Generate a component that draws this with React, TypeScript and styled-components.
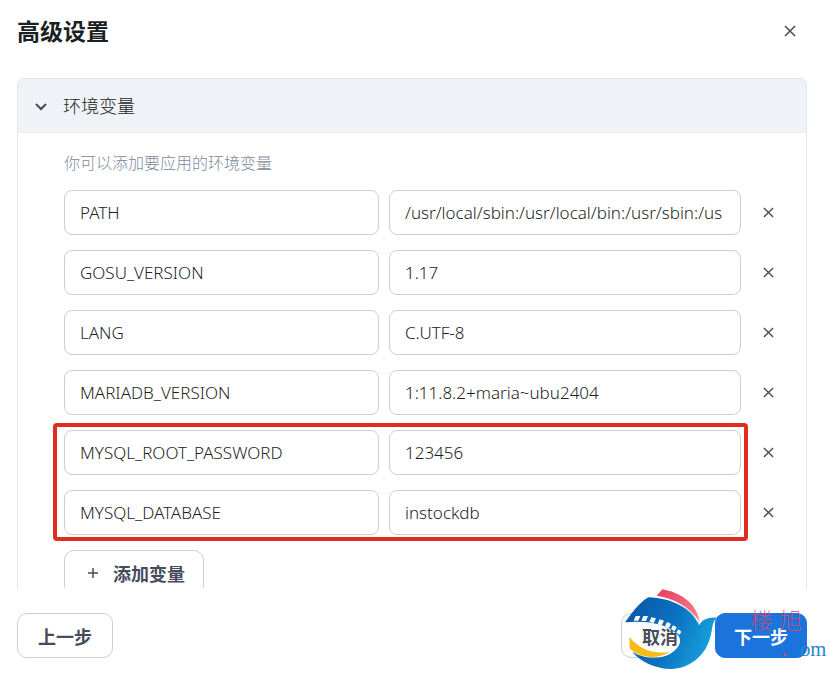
import React, { useState } from "react";
import styled, { createGlobalStyle, css } from "styled-components";

const GlobalStyle = createGlobalStyle`
  *, *::before, *::after { box-sizing: border-box; }
  body {
    margin: 0;
    background: #fff;
    color: #1c1f24;
    font-family: "Noto Sans", "Noto Sans CJK SC", sans-serif;
    font-size: 17px;
  }
  button, input { font: inherit; color: inherit; }
`;

const Dialog = styled.main`
  display: flex;
  flex-direction: column;
  height: 100vh;
  padding: 0 24px 18px 17px;
  overflow: hidden;
`;

const Header = styled.header`
  display: flex;
  flex: none;
  align-items: center;
  justify-content: space-between;
  height: 78px;
  padding: 0 8px 16px 0;
`;

const Title = styled.h1`
  margin: 0;
  font-size: 23px;
  font-weight: 700;
  line-height: 32px;
`;

const IconButton = styled.button`
  display: grid;
  flex: none;
  place-items: center;
  width: 18px;
  height: 18px;
  padding: 0;
  border: 0;
  background: none;
  color: #454c57;
  cursor: pointer;
`;

const ScrollArea = styled.div`
  flex: 1;
  min-height: 0;
  overflow: hidden;
`;

const Panel = styled.section`
  border: 1px solid #e4e8ed;
  border-radius: 6px;
`;

const PanelHeader = styled.button`
  display: flex;
  align-items: center;
  gap: 13px;
  width: 100%;
  height: 54px;
  padding: 0 14px 2px;
  border: 0;
  border-bottom: 1px solid #e9edf2;
  border-radius: 5px 5px 0 0;
  background: #eff3f8;
  font-size: 18px;
  font-weight: 300;
  cursor: pointer;
`;

const PanelBody = styled.div`
  padding: 18px 29px 24px 46px;
`;

const Hint = styled.p`
  margin: 0 0 15px;
  color: #7c8a9d;
  font-size: 16px;
  font-weight: 300;
  line-height: 24px;
`;

const Rows = styled.div`
  display: flex;
  flex-direction: column;
  gap: 15px;
`;

const Highlight = styled(Rows)`
  position: relative;

  &::after {
    position: absolute;
    inset: -7px 29px -6px -11px;
    border: 4px solid #df2d23;
    border-radius: 4px;
    content: "";
    pointer-events: none;
  }
`;

const Row = styled.div`
  display: grid;
  grid-template-columns: 315fr 352fr 26px;
  gap: 10px;
  align-items: center;

  > :last-child { justify-self: end; }
`;

const Field = styled.input`
  width: 100%;
  min-width: 0;
  height: 45px;
  padding: 0 15px;
  border: 1px solid #ccced2;
  border-radius: 8px;
  outline: 0;
  background: #fff;
  font-weight: 300;
`;

const Button = styled.button<{ $primary?: boolean }>`
  display: inline-flex;
  flex: none;
  align-items: center;
  justify-content: center;
  gap: 12px;
  height: 45px;
  padding: 0 20px;
  border: 1px solid #ccced2;
  border-radius: 10px;
  background: #fff;
  color: #454c5b;
  font-size: 18px;
  font-weight: 700;
  cursor: pointer;
  ${(p) => p.$primary && css`
    padding: 0 18px;
    border-color: #1b73dc;
    background: #1b73dc;
    color: #fff;
  `}
`;

const AddButton = styled(Button)`
  margin-top: 15px;
  padding: 0 18px;
`;

const Footer = styled.footer`
  position: relative;
  display: flex;
  flex: none;
  justify-content: space-between;
  padding-top: 25px;
`;

const Actions = styled.div`
  display: flex;
  gap: 16px;
`;

const Watermark = styled.svg`
  position: absolute;
  right: -24px;
  bottom: -18px;
  width: 231px;
  height: 106px;
  overflow: visible;
  pointer-events: none;
`;

const Cross = ({ size }: { size: number }) => (
  <svg width={size} height={size} viewBox="0 0 12 12" fill="none" stroke="currentColor" strokeWidth="1.5" aria-hidden="true">
    <path d="M1 1 11 11M11 1 1 11" />
  </svg>
);

const BirdLogo = () => (
  <Watermark viewBox="0 0 693 318" aria-hidden="true">
    <defs>
      <linearGradient id="bird" x1="0" y1="0.1" x2="1" y2="0.4">
        <stop offset="0" stopColor="#0b55a8" />
        <stop offset="0.55" stopColor="#0a72c0" />
        <stop offset="1" stopColor="#16a0dc" />
      </linearGradient>
      <linearGradient id="crest" x1="0" y1="0" x2="1" y2="1">
        <stop offset="0" stopColor="#e63c5a" />
        <stop offset="1" stopColor="#f08a98" />
      </linearGradient>
    </defs>
    <path fill="url(#crest)" d="M187 58C236 67 288 94 299 154C268 111 220 84 170 77Z" />
    <path fill="url(#bird)" d="M145 82C215 84 277 115 297 166C307 148 326 140 352 143C333 158 339 176 330 205C315 260 265 297 213 297C165 296 121 274 96 245C133 267 180 269 211 251C245 230 248 207 228 190C194 158 132 152 75 157C96 130 116 98 145 82Z" />
    <path fill="#fff" d="M107 138H121L115 152H101ZM130 138H144L138 153H124ZM154 142 168 145 161 159 148 156ZM179 148 192 152 185 166 173 162ZM201 156 213 161 207 174 195 169ZM219 166 230 172 224 183 213 177ZM235 178 244 185 239 194 229 188Z" />
    <path fill="#f7bc13" d="M88 201C119 240 166 254 210 245C165 274 111 259 89 235Z" />
    <g fontFamily='"Noto Sans CJK SC", sans-serif' fontSize="68" fontWeight="100" fill="#e8415a">
      <text x="451" y="178">楼</text>
      <text x="538" y="178">旭</text>
    </g>
    <g fontFamily='"Liberation Serif", serif' fontSize="62">
      <text x="545" y="257" fill="#e8415a">.</text>
      <text x="600" y="257" fill="#268bd0">om</text>
    </g>
  </Watermark>
);

type Variable = { name: string; value: string };

const general: Variable[] = [
  { name: "PATH", value: "/usr/local/sbin:/usr/local/bin:/usr/sbin:/us" },
  { name: "GOSU_VERSION", value: "1.17" },
  { name: "LANG", value: "C.UTF-8" },
  { name: "MARIADB_VERSION", value: "1:11.8.2+maria~ubu2404" },
];

const database: Variable[] = [
  { name: "MYSQL_ROOT_PASSWORD", value: "123456" },
  { name: "MYSQL_DATABASE", value: "instockdb" },
];

const VariableRow = ({ name, value }: Variable) => (
  <Row>
    <Field aria-label="变量名" defaultValue={name} spellCheck={false} />
    <Field aria-label={name} defaultValue={value} spellCheck={false} />
    <IconButton type="button" aria-label={`删除 ${name}`}><Cross size={11} /></IconButton>
  </Row>
);

export default function App() {
  const [open, setOpen] = useState(true);
  return (
    <>
      <GlobalStyle />
      <Dialog>
        <Header>
          <Title>高级设置</Title>
          <IconButton type="button" aria-label="关闭"><Cross size={12} /></IconButton>
        </Header>
        <ScrollArea>
          <Panel>
            <PanelHeader type="button" aria-expanded={open} onClick={() => setOpen(!open)}>
              <svg width="18" height="18" viewBox="0 0 18 18" fill="none" stroke="#454c57" strokeWidth="2" aria-hidden="true">
                <path d="M4 8 9 13 14 8" />
              </svg>
              环境变量
            </PanelHeader>
            {open && (
              <PanelBody>
                <Hint>你可以添加要应用的环境变量</Hint>
                <Rows>
                  {general.map((v) => <VariableRow key={v.name} {...v} />)}
                  <Highlight>
                    {database.map((v) => <VariableRow key={v.name} {...v} />)}
                  </Highlight>
                </Rows>
                <AddButton type="button">
                  <svg width="18" height="18" viewBox="0 0 18 18" fill="none" stroke="currentColor" strokeWidth="1.5" aria-hidden="true">
                    <path d="M10 4V14M5 9H15" />
                  </svg>
                  添加变量
                </AddButton>
              </PanelBody>
            )}
          </Panel>
        </ScrollArea>
        <Footer>
          <Button type="button">上一步</Button>
          <Actions>
            <Button type="button">取消</Button>
            <Button type="button" $primary>下一步</Button>
          </Actions>
          <BirdLogo />
        </Footer>
      </Dialog>
    </>
  );
}
